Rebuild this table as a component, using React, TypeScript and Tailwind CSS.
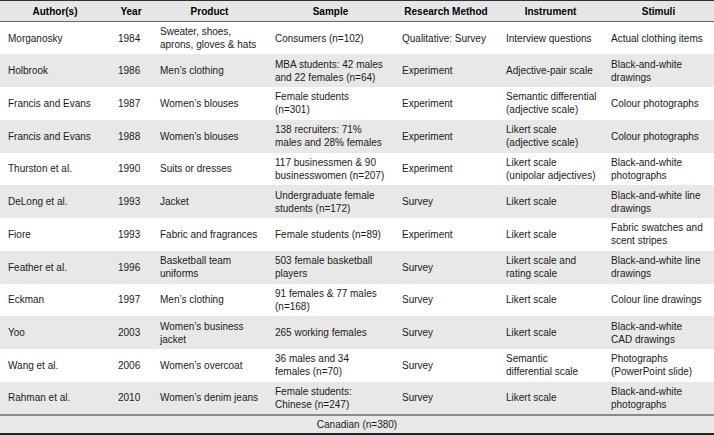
import React from "react";

type Row = {
  author: string;
  year: string;
  product: string[];
  sample: string[];
  method: string;
  instrument: string[];
  stimuli: string[];
};

const rows: Row[] = [
  { author: "Morganosky", year: "1984", product: ["Sweater, shoes,", "aprons, gloves & hats"], sample: ["Consumers (n=102)"], method: "Qualitative: Survey", instrument: ["Interview questions"], stimuli: ["Actual clothing items"] },
  { author: "Holbrook", year: "1986", product: ["Men’s clothing"], sample: ["MBA students: 42 males", "and 22 females (n=64)"], method: "Experiment", instrument: ["Adjective-pair scale"], stimuli: ["Black-and-white", "drawings"] },
  { author: "Francis and Evans", year: "1987", product: ["Women’s blouses"], sample: ["Female students", "(n=301)"], method: "Experiment", instrument: ["Semantic differential", "(adjective scale)"], stimuli: ["Colour photographs"] },
  { author: "Francis and Evans", year: "1988", product: ["Women’s blouses"], sample: ["138 recruiters: 71%", "males and 28% females"], method: "Experiment", instrument: ["Likert scale", "(adjective scale)"], stimuli: ["Colour photographs"] },
  { author: "Thurston et al.", year: "1990", product: ["Suits or dresses"], sample: ["117 businessmen & 90", "businesswomen (n=207)"], method: "Experiment", instrument: ["Likert scale", "(unipolar adjectives)"], stimuli: ["Black-and-white", "photographs"] },
  { author: "DeLong et al.", year: "1993", product: ["Jacket"], sample: ["Undergraduate female", "students (n=172)"], method: "Survey", instrument: ["Likert scale"], stimuli: ["Black-and-white line", "drawings"] },
  { author: "Fiore", year: "1993", product: ["Fabric and fragrances"], sample: ["Female students (n=89)"], method: "Experiment", instrument: ["Likert scale"], stimuli: ["Fabric swatches and", "scent stripes"] },
  { author: "Feather et al.", year: "1996", product: ["Basketball team", "uniforms"], sample: ["503 female basketball", "players"], method: "Survey", instrument: ["Likert scale and", "rating scale"], stimuli: ["Black-and-white line", "drawings"] },
  { author: "Eckman", year: "1997", product: ["Men’s clothing"], sample: ["91 females & 77 males", "(n=168)"], method: "Survey", instrument: ["Likert scale"], stimuli: ["Colour line drawings"] },
  { author: "Yoo", year: "2003", product: ["Women’s business", "jacket"], sample: ["265 working females"], method: "Survey", instrument: ["Likert scale"], stimuli: ["Black-and-white", "CAD drawings"] },
  { author: "Wang et al.", year: "2006", product: ["Women’s overcoat"], sample: ["36 males and 34", "females (n=70)"], method: "Survey", instrument: ["Semantic", "differential scale"], stimuli: ["Photographs", "(PowerPoint slide)"] },
  { author: "Rahman et al.", year: "2010", product: ["Women’s denim jeans"], sample: ["Female students:", "Chinese (n=247)"], method: "Survey", instrument: ["Likert scale"], stimuli: ["Black-and-white", "photographs"] },
];

function Lines({ lines }: { lines: string[] }) {
  return (
    <>
      {lines.map((l, i) => (
        <div key={i} className="whitespace-nowrap">
          {l}
        </div>
      ))}
    </>
  );
}

const headers = ["Author(s)", "Year", "Product", "Sample", "Research Method", "Instrument", "Stimuli"];

export default function App() {
  return (
    <div
      className="w-[714px] h-[435px] bg-white text-[#1a1a1a] overflow-hidden"
      style={{ fontFamily: '"Liberation Sans", Arial, sans-serif' }}
    >
      <table className="w-[714px] table-fixed border-collapse text-[10px] leading-[13px]">
        <colgroup>
          <col className="w-[110px]" />
          <col className="w-[42px]" />
          <col className="w-[115px]" />
          <col className="w-[127px]" />
          <col className="w-[104px]" />
          <col className="w-[105px]" />
          <col className="w-[111px]" />
        </colgroup>
        <thead>
          <tr className="h-[21px] bg-[#e6e6e6] border-t border-t-[#333] border-b border-b-[#666]">
            {headers.map((h) => (
              <th key={h} className="font-bold text-black text-center align-middle px-2">
                {h}
              </th>
            ))}
          </tr>
        </thead>
        <tbody>
          {rows.map((r, i) => (
            <tr key={i} className={`h-[32.75px] ${i % 2 === 1 ? "bg-[#e8e8e8]" : "bg-white"}`}>
              <td className="pl-2 align-middle whitespace-nowrap">{r.author}</td>
              <td className="pl-2 align-middle">{r.year}</td>
              <td className="pl-2 align-middle">
                <Lines lines={r.product} />
              </td>
              <td className="pl-2 align-middle">
                <Lines lines={r.sample} />
              </td>
              <td className="pl-2 align-middle whitespace-nowrap">{r.method}</td>
              <td className="pl-2 align-middle">
                <Lines lines={r.instrument} />
              </td>
              <td className="pl-2 align-middle">
                <Lines lines={r.stimuli} />
              </td>
            </tr>
          ))}
          <tr className="h-[19px] bg-[#e8e8e8] border-t-2 border-t-[#8a8a8a] border-b-2 border-b-[#222]">
            <td colSpan={7} className="text-center align-middle">
              Canadian (n=380)
            </td>
          </tr>
        </tbody>
      </table>
    </div>
  );
}
